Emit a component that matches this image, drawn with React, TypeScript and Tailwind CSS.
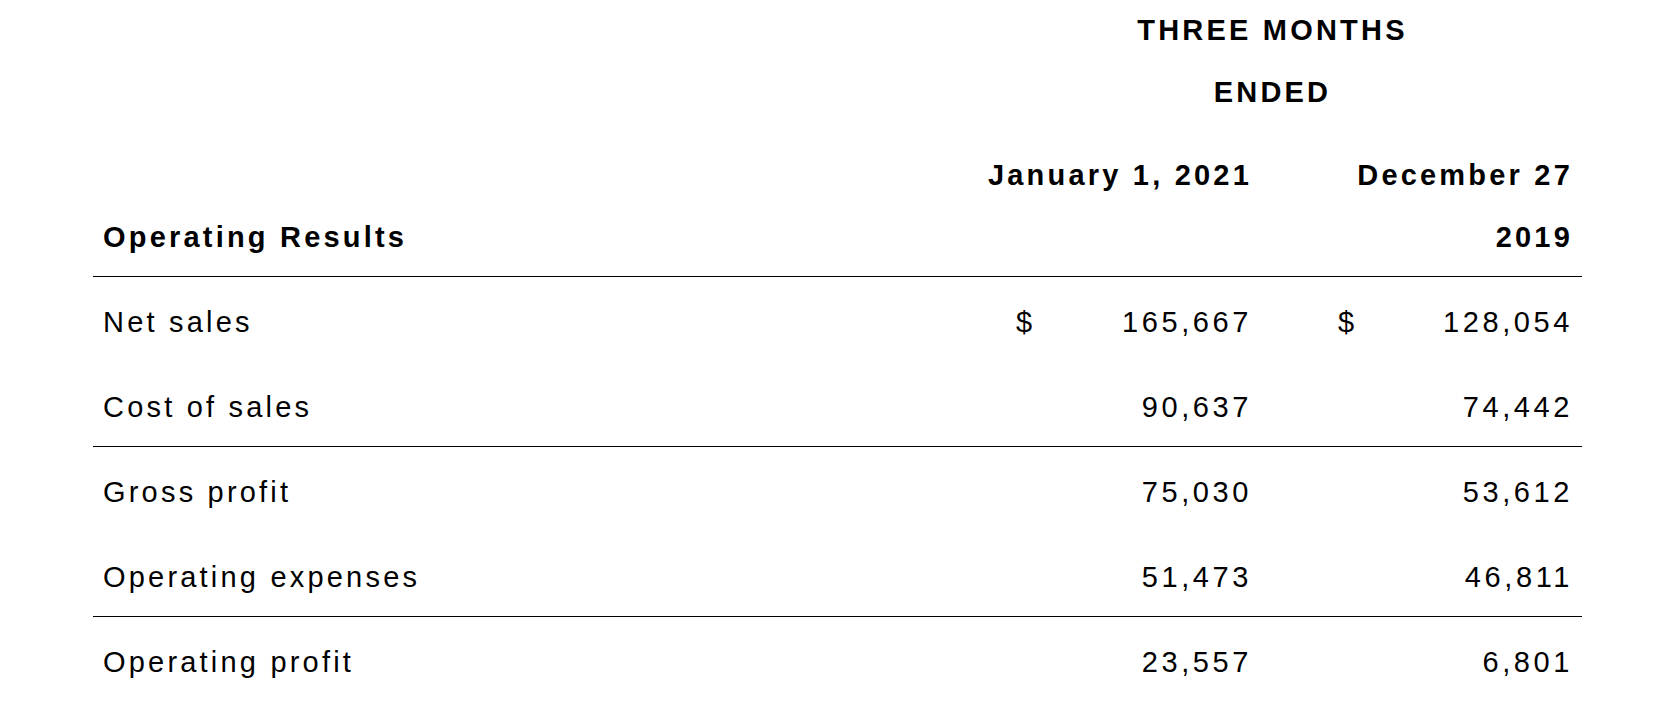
import React from 'react';

interface Row {
  label: string;
  current: string;
  prior: string;
  dollar?: boolean;
  rule?: boolean;
}

const rows: Row[] = [
  { label: 'Net sales', current: '165,667', prior: '128,054', dollar: true },
  { label: 'Cost of sales', current: '90,637', prior: '74,442', rule: true },
  { label: 'Gross profit', current: '75,030', prior: '53,612' },
  { label: 'Operating expenses', current: '51,473', prior: '46,811', rule: true },
  { label: 'Operating profit', current: '23,557', prior: '6,801' },
];

// one period column: optional "$" on the left, figure pushed right
function Amount({ value, dollar, cls }: { value: string; dollar?: boolean; cls: string }) {
  return (
    <div className={`${cls} flex pl-[76px] tracking-[3.6px]`}>
      {dollar && <span>$</span>}
      <span className="ml-auto">{value}</span>
    </div>
  );
}

export default function App() {
  return (
    <div className="min-h-screen bg-white text-black font-['Liberation_Sans',Arial,sans-serif] text-[29px] tracking-[3.2px]">
      <div className="ml-[93px] w-[1489px]">
        {/* period heading */}
        <div className="flex -mt-[1px] leading-[62px] font-bold">
          <div className="w-[847px]" />
          <div className="w-[642px] pl-[32px] pr-[9px] text-center">
            THREE MONTHS
            <br />
            ENDED
          </div>
        </div>

        {/* column dates */}
        <div className="flex pt-[21px] pb-[8px] border-b border-black leading-[62px] font-bold">
          <div className="w-[847px] pl-[10px] self-end">Operating Results</div>
          <div className="w-[322px] pr-[10px] text-right self-start">January 1, 2021</div>
          <div className="w-[320px] pr-[9px] text-right">
            December 27
            <br />
            2019
          </div>
        </div>

        {rows.map((r) => (
          <div
            key={r.label}
            className={`flex h-[85px] pt-[14px] leading-[62px] ${r.rule ? 'border-b border-black' : ''}`}
          >
            <div className="w-[847px] pl-[10px]">{r.label}</div>
            <Amount value={r.current} dollar={r.dollar} cls="w-[322px] pr-[10px]" />
            <Amount value={r.prior} dollar={r.dollar} cls="w-[320px] pr-[9px]" />
          </div>
        ))}
      </div>
    </div>
  );
}
